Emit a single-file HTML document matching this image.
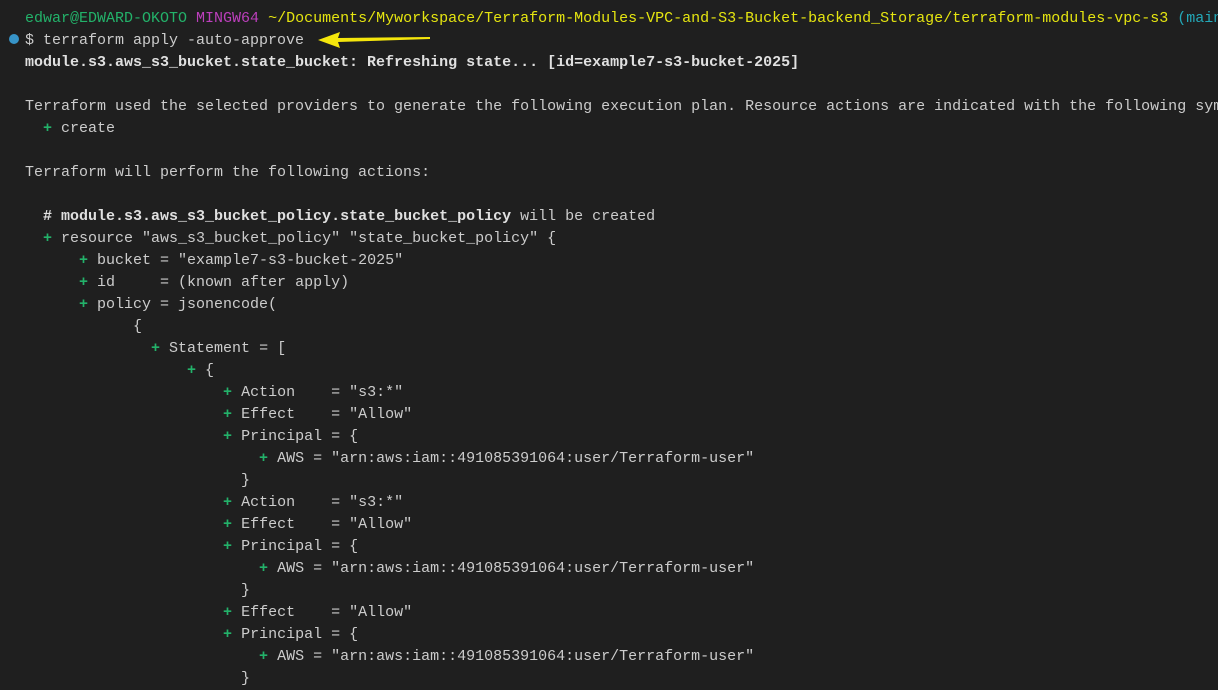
<!DOCTYPE html>
<html><head><meta charset="utf-8"><style>
html,body{margin:0;padding:0;background:#1f1f1f;width:1218px;height:681px;overflow:hidden}
pre{position:absolute;left:25px;top:8px;margin:0;font-family:"Liberation Mono",monospace;font-size:15px;line-height:22px;color:#cccccc;white-space:pre}
.g{color:#23b26a;font-weight:bold}.m{color:#bc3fbc}.y{color:#e5e510}.b{font-weight:bold;color:#e0e0e0}
.dot{position:absolute;left:9px;top:34px;width:10px;height:10px;border-radius:50%;background:#3794c8}
</style></head><body>
<div class="dot"></div>
<svg style="position:absolute;left:316px;top:30px" width="120" height="20"><path d="M2 10 L24 2 L22 8 L114 7 L114 9 L22 12 L24 18 Z" fill="#f5e60c"/></svg>
<pre><span class="g" style="font-weight:normal">edwar@EDWARD-OKOTO</span> <span class="m">MINGW64</span> <span class="y">~/Documents/Myworkspace/Terraform-Modules-VPC-and-S3-Bucket-backend_Storage/terraform-modules-vpc-s3</span> <span style="color:#23a8b8">(main)</span>
$ terraform apply -auto-approve
<span class="b">module.s3.aws_s3_bucket.state_bucket: Refreshing state... [id=example7-s3-bucket-2025]</span>

Terraform used the selected providers to generate the following execution plan. Resource actions are indicated with the following symbols:
  <span class="g">+</span> create

Terraform will perform the following actions:

  <span class="b"># module.s3.aws_s3_bucket_policy.state_bucket_policy</span> will be created
  <span class="g">+</span> resource "aws_s3_bucket_policy" "state_bucket_policy" {
      <span class="g">+</span> bucket = "example7-s3-bucket-2025"
      <span class="g">+</span> id     = (known after apply)
      <span class="g">+</span> policy = jsonencode(
            {
              <span class="g">+</span> Statement = [
                  <span class="g">+</span> {
                      <span class="g">+</span> Action    = "s3:*"
                      <span class="g">+</span> Effect    = "Allow"
                      <span class="g">+</span> Principal = {
                          <span class="g">+</span> AWS = "arn:aws:iam::491085391064:user/Terraform-user"
                        }
                      <span class="g">+</span> Action    = "s3:*"
                      <span class="g">+</span> Effect    = "Allow"
                      <span class="g">+</span> Principal = {
                          <span class="g">+</span> AWS = "arn:aws:iam::491085391064:user/Terraform-user"
                        }
                      <span class="g">+</span> Effect    = "Allow"
                      <span class="g">+</span> Principal = {
                          <span class="g">+</span> AWS = "arn:aws:iam::491085391064:user/Terraform-user"
                        }
</pre>
</body></html>
